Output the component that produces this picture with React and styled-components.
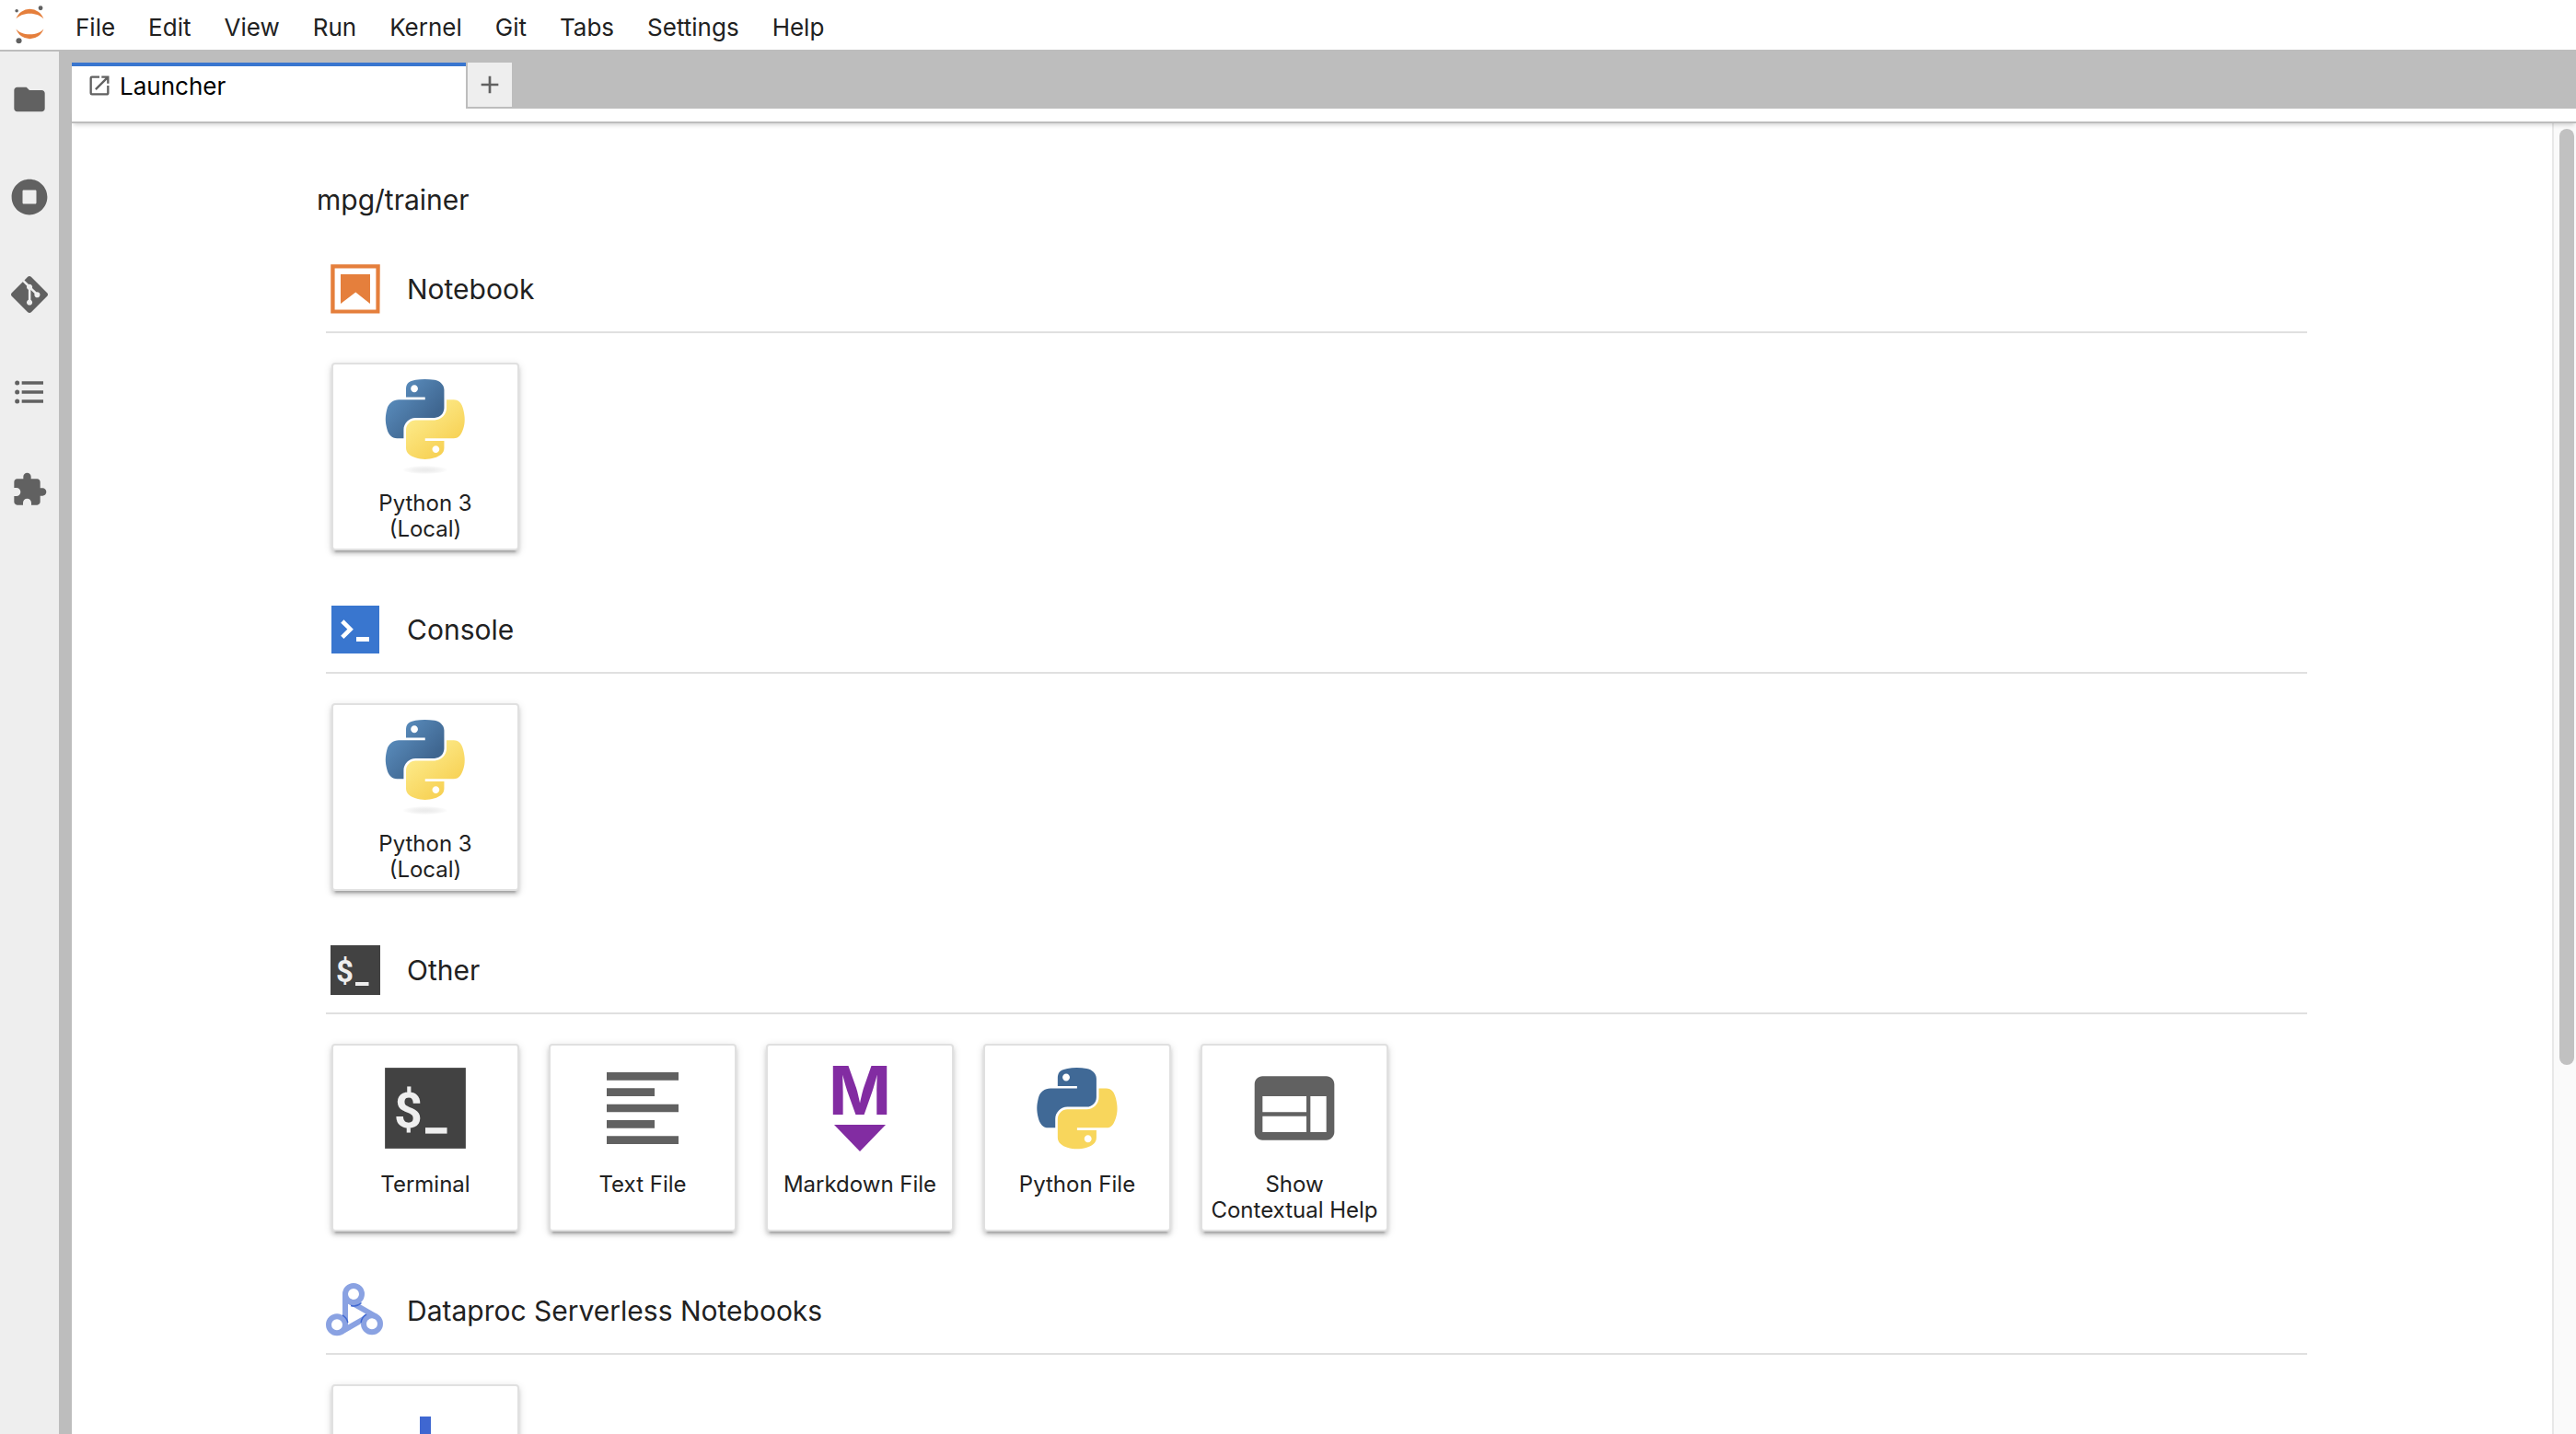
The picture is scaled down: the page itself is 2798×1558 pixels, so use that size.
import React from "react";
import styled, { createGlobalStyle } from "styled-components";

const GlobalStyle = createGlobalStyle`
  *, *::before, *::after { box-sizing: border-box; }
  body {
    margin: 0;
    background: #ffffff;
    color: #212121;
    font-family: Inter, "Liberation Sans", sans-serif;
    font-size: 26px;
  }
  button { font: inherit; color: inherit; border: 0; padding: 0; background: none; cursor: pointer; }
  svg { display: block; flex: none; overflow: visible; }
`;

/* ---------- Layout ---------- */

const Shell = styled.div`
  display: flex;
  flex-direction: column;
  height: 100vh;
  overflow: hidden;
`;

const MenuBar = styled.header`
  display: flex;
  align-items: stretch;
  height: 56px;
  flex: none;
  border-bottom: 2px solid #bdbdbd;
`;

const LogoBox = styled.div`
  display: flex;
  align-items: center;
  justify-content: center;
  width: 64px;
`;

const Menu = styled.nav`
  display: flex;
  padding-top: 4px;
`;

const MenuItem = styled.button`
  padding: 0 18px;
`;

const Workspace = styled.div`
  display: flex;
  flex: 1;
  min-height: 0;
`;

const SideBar = styled.nav`
  display: flex;
  flex-direction: column;
  gap: 2px;
  width: 64px;
  flex: none;
  background: #eeeeee;
`;

const SideButton = styled.button`
  display: flex;
  align-items: center;
  justify-content: center;
  height: 104px;
`;

const Dock = styled.main`
  display: flex;
  flex-direction: column;
  flex: 1;
  min-width: 0;
  padding-left: 14px;
  background: #bdbdbd;
`;

const TabBar = styled.div`
  display: flex;
  align-items: flex-start;
  gap: 2px;
  height: 62px;
  padding-top: 12px;
  flex: none;
`;

const Tab = styled.button`
  display: flex;
  align-items: center;
  gap: 8px;
  width: 428px;
  height: 50px;
  padding: 0 16px 4px;
  border-top: 4px solid #3976cf;
  background: #ffffff;
  color: #000000;
`;

const AddTab = styled.button`
  display: flex;
  align-items: center;
  justify-content: center;
  width: 48px;
  height: 48px;
  background: #eeeeee;
`;

const ToolStrip = styled.div`
  position: relative;
  z-index: 1;
  height: 16px;
  flex: none;
  background: #ffffff;
  border-bottom: 2px solid #bdbdbd;
  box-shadow: 0 4px 4px -2px rgba(0, 0, 0, 0.16);
`;

const Panel = styled.div`
  display: flex;
  flex: 1;
  min-height: 0;
  background: #ffffff;
`;

const Launcher = styled.div`
  flex: 1;
  min-width: 0;
  overflow: hidden;
  padding: 64px 266px 0;
`;

const ScrollTrack = styled.div`
  display: flex;
  flex-direction: column;
  align-items: center;
  width: 26px;
  flex: none;
  padding: 6px 0;
  border-left: 2px solid #e8e8e8;
  background: #fafafa;
`;

const ScrollThumb = styled.div`
  width: 16px;
  height: 72%;
  margin-left: 4px;
  border-radius: 8px;
  background: #c1c1c1;
`;

/* ---------- Launcher content ---------- */

const Path = styled.h1`
  margin: 0 0 46px;
  font-size: 30px;
  font-weight: 400;
  line-height: 38px;
`;

const Section = styled.section`
  margin: 0 0 54px 10px;
`;

const SectionHeader = styled.div`
  display: flex;
  align-items: center;
  gap: 24px;
  padding-bottom: 14px;
  border-bottom: 2px solid #e0e0e0;
`;

const SectionTitle = styled.h2`
  margin: 0;
  font-size: 30px;
  font-weight: 400;
  line-height: 38px;
`;

const CardRow = styled.div`
  display: flex;
  flex-wrap: wrap;
  gap: 32px;
  padding: 32px 6px 0;
`;

const Card = styled.button`
  display: flex;
  flex-direction: column;
  align-items: center;
  gap: 17px;
  width: 204px;
  height: 204px;
  padding-top: 16px;
  border: 2px solid #e0e0e0;
  border-radius: 4px;
  background: #ffffff;
  box-shadow:
    0 6px 2px -4px rgba(0, 0, 0, 0.2),
    0 4px 4px 0 rgba(0, 0, 0, 0.14),
    0 2px 10px 0 rgba(0, 0, 0, 0.12);
`;

const CardLabel = styled.span`
  font-size: 24px;
  line-height: 28px;
  text-align: center;
  white-space: pre-line;
`;

/* ---------- Icons ---------- */

const GREY = "#616161";

const Glyph = ({ size, box = 24, d, fill = GREY }) => (
  <svg width={size} height={size} viewBox={`0 0 ${box} ${box}`} fill={fill} aria-hidden="true">
    <path d={d} />
  </svg>
);

const PATHS = {
  folder: "M10 4H4c-1.1 0-1.99.9-1.99 2L2 18c0 1.1.9 2 2 2h16c1.1 0 2-.9 2-2V8c0-1.1-.9-2-2-2h-8l-2-2z",
  running:
    "M256 8C119 8 8 119 8 256s111 248 248 248 248-111 248-248S393 8 256 8zm96 328c0 8.8-7.2 16-16 16H176c-8.8 0-16-7.2-16-16V176c0-8.8 7.2-16 16-16h160c8.8 0 16 7.2 16 16v160z",
  git: "M23.546 10.93L13.067.452c-.604-.603-1.582-.603-2.188 0L8.708 2.627l2.76 2.76c.645-.215 1.379-.07 1.889.441.516.515.658 1.258.438 1.9l2.658 2.66c.645-.223 1.387-.078 1.9.435.721.72.721 1.884 0 2.604-.719.719-1.881.719-2.6 0-.539-.541-.674-1.337-.404-1.996L12.86 8.955v6.525c.176.086.342.203.488.348.713.721.713 1.883 0 2.6-.719.721-1.889.721-2.609 0-.719-.719-.719-1.879 0-2.598.182-.18.387-.316.605-.406V8.835c-.217-.091-.424-.222-.6-.401-.545-.545-.676-1.342-.396-2.009L7.636 3.7.45 10.881c-.6.605-.6 1.584 0 2.189l10.48 10.477c.604.604 1.582.604 2.186 0l10.43-10.43c.605-.603.605-1.582 0-2.187",
  list: "M7 5h14v2H7V5m0 8v-2h14v2H7M4 4.5a1.5 1.5 0 1 1 0 3 1.5 1.5 0 0 1 0-3m0 6a1.5 1.5 0 1 1 0 3 1.5 1.5 0 0 1 0-3M7 19v-2h14v2H7m-3-2.5a1.5 1.5 0 1 1 0 3 1.5 1.5 0 0 1 0-3z",
  extension:
    "M20.5 11H19V7c0-1.1-.9-2-2-2h-4V3.5C13 2.12 11.88 1 10.5 1S8 2.12 8 3.5V5H4c-1.1 0-1.99.9-1.99 2v3.8H3.5c1.49 0 2.7 1.21 2.7 2.7s-1.21 2.7-2.7 2.7H2V20c0 1.1.9 2 2 2h3.8v-1.5c0-1.49 1.21-2.7 2.7-2.7 1.49 0 2.7 1.21 2.7 2.7V22H17c1.1 0 2-.9 2-2v-4h1.5c1.38 0 2.5-1.12 2.5-2.5S21.88 11 20.5 11z",
  launcher:
    "M19 19H5V5h7V3H5a2 2 0 0 0-2 2v14a2 2 0 0 0 2 2h14c1.1 0 2-.9 2-2v-7h-2v7zM14 3v2h3.59l-9.83 9.83 1.41 1.41L19 6.41V10h2V3h-7z",
  add: "M19 13h-6v6h-2v-6H5v-2h6V5h2v6h6v2z",
  textFile: "M15 15H3v2h12v-2zm0-8H3v2h12V7zM3 13h18v-2H3v2zm0 8h18v-2H3v2zM3 3v2h18V3H3z",
  help: "M20 4H4c-1.1 0-1.99.9-1.99 2L2 18c0 1.1.9 2 2 2h16c1.1 0 2-.9 2-2V6c0-1.1-.9-2-2-2zm-5 14H4v-4h11v4zm0-5H4V9h11v4zm5 5h-4V9h4v9z",
};

const JupyterLogo = () => (
  <svg width="32" height="42" viewBox="0 0 39 51" aria-label="Jupyter" role="img">
    <g fill="#e57f3c">
      <path
        transform="translate(1.74 30.98)"
        d="M18.265 7.134C10.415 7.134 3.559 4.258 0 0c1.325 3.82 3.796 7.131 7.069 9.473a19.25 19.25 0 0 0 22.4 0C32.742 7.131 35.213 3.82 36.538 0c-3.567 4.258-10.423 7.134-18.273 7.134Z"
      />
      <path
        transform="translate(1.73 4.48)"
        d="M18.273 5.939c7.85 0 14.706 2.877 18.265 7.134-1.325-3.82-3.796-7.13-7.069-9.473a19.25 19.25 0 0 0-22.4 0C3.796 5.943 1.325 9.253 0 13.073c3.567-4.249 10.423-7.134 18.273-7.134Z"
      />
    </g>
    <g fill={GREY}>
      <circle cx="34.2" cy="3.3" r="2.95" />
      <circle cx="5.5" cy="46.6" r="3.7" />
      <circle cx="2.6" cy="7" r="2.15" />
    </g>
  </svg>
);

const NotebookIcon = () => (
  <svg width="64" height="64" viewBox="0 0 22 22" fill="#e57f3c" aria-hidden="true">
    <path d="M18.7 3.3v15.4H3.3V3.3h15.4m1.5-1.5H1.8v18.3h18.3l.1-18.3z" />
    <path d="M16.5 16.5l-5.4-4.3-5.6 4.3v-11h11z" />
  </svg>
);

const ConsoleIcon = () => (
  <svg width="64" height="64" viewBox="0 0 64 64" aria-hidden="true">
    <rect x="6" y="6" width="52" height="52" fill="#3976cf" />
    <path d="M17.8 23 26.6 31.7 17.8 40.4" fill="none" stroke="#fff" strokeWidth="4.6" />
    <rect x="33" y="40" width="14" height="5" fill="#fff" />
  </svg>
);

const Prompt = styled.text`
  font: 700 33px Roboto, sans-serif;
  fill: #eeeeee;
`;

const TerminalIcon = ({ size }) => (
  <svg width={size} height={size} viewBox="0 0 64 64" aria-hidden="true">
    <rect x="5" y="5" width="54" height="54" fill="#424242" />
    <Prompt x="11" y="45">$</Prompt>
    <rect x="32" y="45" width="14.5" height="4" fill="#eeeeee" />
  </svg>
);

const BLUE_SNAKE =
  "M54.919 0C50.335.022 45.958.413 42.106 1.095 30.76 3.099 28.7 7.295 28.7 15.032v10.219h26.813v3.406H18.638c-7.793 0-14.616 4.684-16.75 13.594-2.462 10.213-2.571 16.586 0 27.25 1.906 7.938 6.457 13.594 14.25 13.594h9.218v-12.25c0-8.85 7.657-16.657 16.75-16.657h26.782c7.454 0 13.406-6.138 13.406-13.625V15.032c0-7.266-6.13-12.725-13.406-13.937C64.282.328 59.502-.02 54.919 0zM40.419 8.22c2.769 0 5.031 2.298 5.031 5.125 0 2.816-2.262 5.093-5.031 5.093-2.78 0-5.031-2.277-5.031-5.093 0-2.827 2.251-5.125 5.031-5.125z";
const YELLOW_SNAKE =
  "M85.638 28.657v11.906c0 9.231-7.826 17-16.75 17H42.106c-7.336 0-13.406 6.279-13.406 13.625v25.532c0 7.266 6.319 11.54 13.406 13.625 8.487 2.495 16.626 2.946 26.782 0 6.75-1.955 13.406-5.888 13.406-13.625V86.501H55.513v-3.406H95.7c7.792 0 10.696-5.436 13.406-13.594 2.8-8.399 2.68-16.476 0-27.25-1.925-7.757-5.604-13.594-13.406-13.594zM70.575 93.313c2.78 0 5.031 2.278 5.031 5.094 0 2.827-2.251 5.125-5.031 5.125-2.769 0-5.031-2.298-5.031-5.125 0-2.816 2.262-5.094 5.031-5.094z";

const PythonKernelIcon = ({ id }) => (
  <svg width="104" height="104" viewBox="-11.4 0 134.5 134.5" aria-hidden="true">
    <defs>
      <linearGradient id={`${id}-blue`} x1="0" y1="0" x2="0.75" y2="0.7">
        <stop offset="0" stopColor="#6298ca" />
        <stop offset="1" stopColor="#3f6690" />
      </linearGradient>
      <linearGradient id={`${id}-yellow`} x1="0.25" y1="0.25" x2="0.7" y2="0.85">
        <stop offset="0" stopColor="#fce885" />
        <stop offset="1" stopColor="#f7d154" />
      </linearGradient>
      <radialGradient id={`${id}-shade`}>
        <stop offset="0" stopColor="#b8b8b8" stopOpacity="0.28" />
        <stop offset="1" stopColor="#7f7f7f" stopOpacity="0" />
      </radialGradient>
    </defs>
    <ellipse cx="55.6" cy="127.4" rx="32" ry="6" fill={`url(#${id}-shade)`} />
    <path d={BLUE_SNAKE} fill={`url(#${id}-blue)`} />
    <path d={YELLOW_SNAKE} fill={`url(#${id}-yellow)`} />
  </svg>
);

const PythonFileIcon = () => (
  <svg width="104" height="104" viewBox="-10.6 -10.3 132.5 132.5" aria-hidden="true">
    <path d={BLUE_SNAKE} fill="#406996" />
    <path d={YELLOW_SNAKE} fill="#f8d65c" />
  </svg>
);

const MarkdownM = styled.text`
  font: 700 73px Inter, sans-serif;
  text-anchor: middle;
`;

const MarkdownIcon = () => (
  <svg width="104" height="104" viewBox="0 0 104 104" fill="#822ca2" aria-hidden="true">
    <MarkdownM x="52" y="59">M</MarkdownM>
    <path d="M24 70h56L52 99z" />
  </svg>
);

const DataprocIcon = () => (
  <svg width="64" height="64" viewBox="0 0 64 64" fill="none" stroke="#8aa2e2" strokeWidth="6" aria-hidden="true">
    <circle cx="30" cy="14" r="9" />
    <circle cx="12" cy="47.3" r="9" />
    <circle cx="50" cy="46.3" r="9" />
    <path d="M21 14v33.3M25.5 21.8l29 16.7M16.5 55.1l29-16.6" />
    <g stroke="#4169d2" strokeWidth="1.5">
      <path d="M18 36.9a12 12 0 0 1 5.8 8.1" />
      <path d="M38.5 23.5a12 12 0 0 1-11.5 3" />
      <path d="M38.1 45a12 12 0 0 1 5.9-9" />
    </g>
  </svg>
);

const PlusIcon = () => (
  <svg width="104" height="104" viewBox="0 0 104 104" fill="#3f67d1" aria-hidden="true">
    <path d="M46 17h12v29h29v12H58v29H46V58H17V46h29z" />
  </svg>
);

/* ---------- Data ---------- */

const MENUS = ["File", "Edit", "View", "Run", "Kernel", "Git", "Tabs", "Settings", "Help"];

const SIDE_ITEMS = [
  { id: "folder" },
  { id: "running", box: 512 },
  { id: "git" },
  { id: "list" },
  { id: "extension" },
];

const SECTIONS = [
  {
    title: "Notebook",
    icon: <NotebookIcon />,
    cards: [{ label: "Python 3\n(Local)", icon: <PythonKernelIcon id="notebook" /> }],
  },
  {
    title: "Console",
    icon: <ConsoleIcon />,
    cards: [{ label: "Python 3\n(Local)", icon: <PythonKernelIcon id="console" /> }],
  },
  {
    title: "Other",
    icon: <TerminalIcon size={64} />,
    cards: [
      { label: "Terminal", icon: <TerminalIcon size={104} /> },
      { label: "Text File", icon: <Glyph size={104} d={PATHS.textFile} /> },
      { label: "Markdown File", icon: <MarkdownIcon /> },
      { label: "Python File", icon: <PythonFileIcon /> },
      { label: "Show\nContextual Help", icon: <Glyph size={104} d={PATHS.help} /> },
    ],
  },
  {
    title: "Dataproc Serverless Notebooks",
    icon: <DataprocIcon />,
    cards: [{ icon: <PlusIcon /> }],
  },
];

export default function App() {
  return (
    <Shell>
      <GlobalStyle />
      <MenuBar>
        <LogoBox>
          <JupyterLogo />
        </LogoBox>
        <Menu>
          {MENUS.map((name) => (
            <MenuItem key={name}>{name}</MenuItem>
          ))}
        </Menu>
      </MenuBar>
      <Workspace>
        <SideBar>
          {SIDE_ITEMS.map(({ id, box }) => (
            <SideButton key={id} aria-label={id}>
              <Glyph size={40} box={box} d={PATHS[id]} />
            </SideButton>
          ))}
        </SideBar>
        <Dock>
          <TabBar>
            <Tab>
              <Glyph size={28} d={PATHS.launcher} />
              Launcher
            </Tab>
            <AddTab aria-label="add">
              <Glyph size={32} d={PATHS.add} />
            </AddTab>
          </TabBar>
          <ToolStrip />
          <Panel>
            <Launcher>
              <Path>mpg/trainer</Path>
              {SECTIONS.map((section) => (
                <Section key={section.title}>
                  <SectionHeader>
                    {section.icon}
                    <SectionTitle>{section.title}</SectionTitle>
                  </SectionHeader>
                  <CardRow>
                    {section.cards.map((card, i) => (
                      <Card key={i}>
                        {card.icon}
                        {card.label && <CardLabel>{card.label}</CardLabel>}
                      </Card>
                    ))}
                  </CardRow>
                </Section>
              ))}
            </Launcher>
            <ScrollTrack>
              <ScrollThumb />
            </ScrollTrack>
          </Panel>
        </Dock>
      </Workspace>
    </Shell>
  );
}
